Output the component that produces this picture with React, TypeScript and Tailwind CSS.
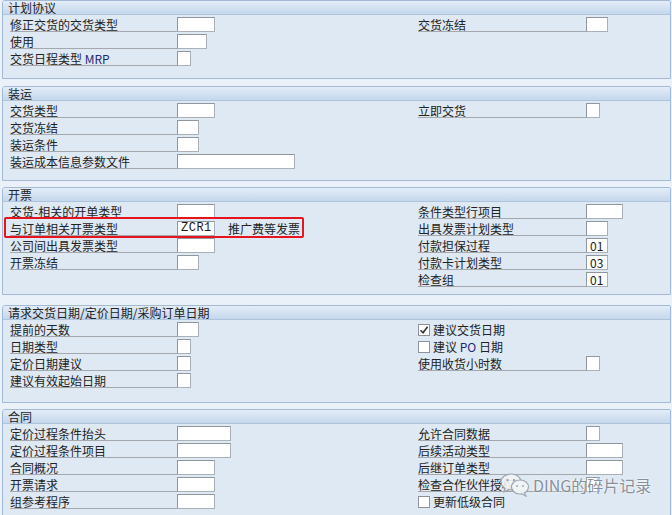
import React from 'react';

type Field = {
  label: string;
  box?: string; // width class of the input box
  value?: string;
  mono?: boolean;
  check?: boolean; // checkbox + label row
  checked?: boolean;
  after?: string;
  latin?: string;
};

const font = { fontFamily: '"Noto Sans CJK SC", "Noto Sans", sans-serif' };

const Box: React.FC<{ w: string; value?: string; mono?: boolean }> = ({ w, value, mono }) => (
  <div
    className={`${w} h-[15px] bg-white border border-[#a9b0b8] border-t-[#8f969e] border-l-[#8f969e] text-[12px] leading-[13px] pl-[3px] text-[#1a1a1a] overflow-hidden`}
    style={mono ? { fontFamily: '"Liberation Mono", monospace', letterSpacing: '0.5px' } : undefined}
  >
    {value}
  </div>
);

const CheckBox: React.FC<{ checked?: boolean }> = ({ checked }) => (
  <div className="w-[12px] h-[12px] mt-[2px] bg-white border border-[#8c939b] flex items-center justify-center">
    {checked && (
      <svg width="10" height="10" viewBox="0 0 10 10">
        <path d="M1.5 5.2 L4 7.8 L8.6 1.8" fill="none" stroke="#333" strokeWidth="1.6" />
      </svg>
    )}
  </div>
);

const Row: React.FC<{ f: Field; labelW: string }> = ({ f, labelW }) => {
  if (f.check) {
    return (
      <div className="flex h-[17px] items-start">
        <CheckBox checked={f.checked} />
        <span className="ml-[3px] text-[12px] leading-[16px] text-[#222]">
          {f.label}
          {f.latin && <span className="text-[#1d2a78]"> {f.latin} </span>}
          {f.after}
        </span>
      </div>
    );
  }
  return (
    <div className="flex h-[17px] items-start">
      <div className={`${labelW} h-[15px] border-b border-[#a4a8ad] text-[12px] leading-[15px] text-[#222] whitespace-nowrap overflow-hidden`}>
        {f.label}
        {f.latin && <span className="text-[#1d2a78]"> {f.latin}</span>}
      </div>
      {f.box && <Box w={f.box} value={f.value} mono={f.mono} />}
      {f.after && <span className="ml-[13px] text-[12px] leading-[15px] text-[#222]">{f.after}</span>}
    </div>
  );
};

const Section: React.FC<{ title: string; cls: string; left: Field[]; right: Field[] }> = ({ title, cls, left, right }) => (
  <div className={`${cls} border border-[#a2bad6] rounded-tl-[3px] rounded-tr-[2px] bg-[#dee9f4] overflow-hidden`}>
    <div className="h-[14px] border-b border-[#aec3dc] bg-gradient-to-b from-[#e4edf8] to-[#c4d7ec] pl-[5px] text-[12px] leading-[13px] text-[#222]">
      {title}
    </div>
    <div className="flex pt-[2px] pl-[7px]">
      <div className="w-[408px] flex flex-col">
        {left.map((f, i) => (
          <Row key={i} f={f} labelW="w-[167px]" />
        ))}
      </div>
      <div className="flex flex-col">
        {right.map((f, i) => (
          <Row key={i} f={f} labelW="w-[168px]" />
        ))}
      </div>
    </div>
  </div>
);

const WeChatIcon: React.FC = () => (
  <svg width="30" height="24" viewBox="0 0 30 24">
    <ellipse cx="11" cy="9" rx="10" ry="8" fill="#f4f6f8" stroke="#9aa3ab" strokeWidth="1.2" />
    <path d="M5 15 L4 19 L9 16.5" fill="#f4f6f8" stroke="#9aa3ab" strokeWidth="1.2" />
    <ellipse cx="20" cy="14" rx="8.5" ry="7" fill="#f4f6f8" stroke="#9aa3ab" strokeWidth="1.2" />
    <path d="M24 19.5 L26 23 L21 20.5" fill="#f4f6f8" stroke="#9aa3ab" strokeWidth="1.2" />
    <circle cx="7.5" cy="7" r="1.2" fill="#9aa3ab" />
    <circle cx="14" cy="7" r="1.2" fill="#9aa3ab" />
    <circle cx="17" cy="13" r="1" fill="#9aa3ab" />
    <circle cx="23" cy="13" r="1" fill="#9aa3ab" />
  </svg>
);

export default function App() {
  return (
    <div className="relative w-[672px] h-[515px] overflow-hidden bg-[#ebf1f8] pl-[2px] pr-[1px]" style={font}>
      <Section
        title="计划协议"
        cls="h-[79px]"
        left={[
          { label: '修正交货的交货类型', box: 'w-[38px]' },
          { label: '使用', box: 'w-[30px]' },
          { label: '交货日程类型', latin: 'MRP', box: 'w-[14px]' },
        ]}
        right={[{ label: '交货冻结', box: 'w-[22px]' }]}
      />
      <Section
        title="装运"
        cls="mt-[7px] h-[95px]"
        left={[
          { label: '交货类型', box: 'w-[38px]' },
          { label: '交货冻结', box: 'w-[22px]' },
          { label: '装运条件', box: 'w-[22px]' },
          { label: '装运成本信息参数文件', box: 'w-[118px]' },
        ]}
        right={[{ label: '立即交货', box: 'w-[14px]' }]}
      />
      <Section
        title="开票"
        cls="mt-[6px] h-[108px]"
        left={[
          { label: '交货-相关的开单类型', box: 'w-[38px]' },
          { label: '与订单相关开票类型', box: 'w-[38px]', value: 'ZCR1', mono: true, after: '推广费等发票' },
          { label: '公司间出具发票类型', box: 'w-[38px]' },
          { label: '开票冻结', box: 'w-[22px]' },
        ]}
        right={[
          { label: '条件类型行项目', box: 'w-[37px]' },
          { label: '出具发票计划类型', box: 'w-[22px]' },
          { label: '付款担保过程', box: 'w-[22px]', value: '01' },
          { label: '付款卡计划类型', box: 'w-[22px]', value: '03' },
          { label: '检查组', box: 'w-[22px]', value: '01' },
        ]}
      />
      <Section
        title="请求交货日期/定价日期/采购订单日期"
        cls="mt-[10px] h-[98px]"
        left={[
          { label: '提前的天数', box: 'w-[22px]' },
          { label: '日期类型', box: 'w-[14px]' },
          { label: '定价日期建议', box: 'w-[14px]' },
          { label: '建议有效起始日期', box: 'w-[14px]' },
        ]}
        right={[
          { label: '建议交货日期', check: true, checked: true },
          { label: '建议', latin: 'PO', after: '日期', check: true },
          { label: '使用收货小时数', box: 'w-[14px]' },
        ]}
      />
      <Section
        title="合同"
        cls="mt-[6px] h-[120px]"
        left={[
          { label: '定价过程条件抬头', box: 'w-[54px]' },
          { label: '定价过程条件项目', box: 'w-[54px]' },
          { label: '合同概况', box: 'w-[38px]' },
          { label: '开票请求', box: 'w-[38px]' },
          { label: '组参考程序', box: 'w-[38px]' },
        ]}
        right={[
          { label: '允许合同数据', box: 'w-[14px]' },
          { label: '后续活动类型', box: 'w-[37px]' },
          { label: '后继订单类型', box: 'w-[37px]' },
          { label: '检查合作伙伴授权', box: 'w-[14px]' },
          { label: '更新低级合同', check: true },
        ]}
      />

      {/* red highlight around the billing row */}
      <div className="absolute left-[4px] top-[217px] w-[300px] h-[21px] border-2 border-[#e6141c] rounded-[2px]" />

      {/* watermark */}
      <div className="absolute left-[500px] top-[473px] flex items-center gap-[3px] opacity-90">
        <WeChatIcon />
        <span className="text-[16px] leading-[22px] text-[#7d8790] [text-shadow:0_0_2px_#fff,0_0_2px_#fff]">DING的碎片记录</span>
      </div>
    </div>
  );
}
